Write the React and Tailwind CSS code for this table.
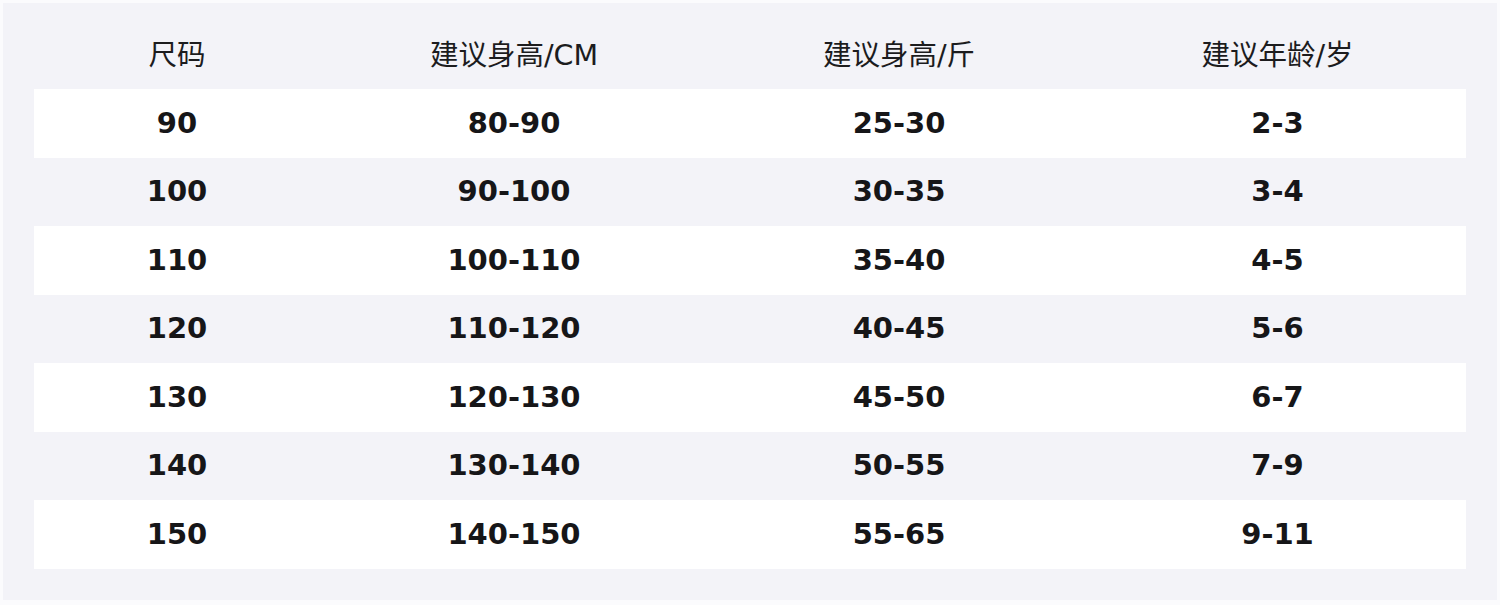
import React from 'react';

// size chart rows: [size, height cm, weight jin, age]
const ROWS = [
  ['90', '80-90', '25-30', '2-3'],
  ['100', '90-100', '30-35', '3-4'],
  ['110', '100-110', '35-40', '4-5'],
  ['120', '110-120', '40-45', '5-6'],
  ['130', '120-130', '45-50', '6-7'],
  ['140', '130-140', '50-55', '7-9'],
  ['150', '140-150', '55-65', '9-11'],
];

const HEADERS = ['尺码', '建议身高/CM', '建议身高/斤', '建议年龄/岁'];

const COLS = 'grid grid-cols-[286px_388px_382px_375px]';

export default function App() {
  return (
    <div
      className="w-[1500px] h-[605px] bg-[#fbfbfd] p-[3px] pb-[5px]"
      style={{ fontFamily: '"DejaVu Sans", "Noto Sans CJK SC", sans-serif' }}
    >
      <div className="h-full bg-[#f3f3f8] px-[31px]">
        <div className={`${COLS} h-[86px] pt-[33px] text-[28.5px] leading-[40px] text-[#1c1c1e]`}>
          {HEADERS.map((h) => (
            <div key={h} className="text-center">{h}</div>
          ))}
        </div>

        <div>
          {ROWS.map((r, i) => (
            <div
              key={r[0]}
              className={`${COLS} h-[68.5px] items-center text-[29px] font-bold text-[#161618] ${
                i % 2 === 0 ? 'bg-white' : ''
              }`}
            >
              {r.map((c, j) => (
                <div key={j} className="text-center">{c}</div>
              ))}
            </div>
          ))}
        </div>
      </div>
    </div>
  );
}
